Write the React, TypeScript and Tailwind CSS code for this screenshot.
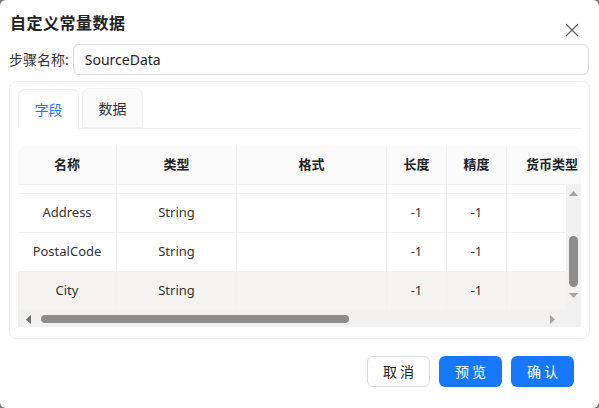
import React from "react";

const font = { fontFamily: '"Segoe UI", "Noto Sans", "Noto Sans CJK SC", sans-serif' };

const cols = [
  { key: "name", label: "名称", w: "w-[99px]" },
  { key: "type", label: "类型", w: "w-[120px]" },
  { key: "fmt", label: "格式", w: "w-[150px]" },
  { key: "len", label: "长度", w: "w-[60px]" },
  { key: "prec", label: "精度", w: "w-[60px]" },
  { key: "cur", label: "货币类型", w: "w-[90px]" },
];

const rows = [
  { name: "Address", type: "String", fmt: "", len: "-1", prec: "-1", cur: "" },
  { name: "PostalCode", type: "String", fmt: "", len: "-1", prec: "-1", cur: "" },
  { name: "City", type: "String", fmt: "", len: "-1", prec: "-1", cur: "", hover: true },
];

export default function App() {
  return (
    <div className="w-[599px] h-[408px] bg-[#7d7d7d]" style={font}>
      <div className="w-[599px] h-[408px] bg-white rounded-[6px] flex flex-col text-[#1f1f1f]">
        {/* Title */}
        <div className="flex items-center justify-between h-[44px] pl-[10px] pr-[20px] pt-[1px]">
          <div className="text-[16px] font-bold tracking-[0.5px] text-[#222]">自定义常量数据</div>
          <svg width="14" height="14" viewBox="0 0 14 14" className="mt-[14px]">
            <path d="M1 1 L13 13 M13 1 L1 13" stroke="#666" strokeWidth="1.3" fill="none" />
          </svg>
        </div>
        {/* step name */}
        <div className="flex items-center h-[31px] pl-[9px] pr-[10px]">
          <span className="text-[14px] text-[#333] mr-[4px]">步骤名称:</span>
          <div className="flex-1 h-[31px] border border-[#d9d9d9] rounded-[6px] flex items-center pl-[11px] text-[14px] text-[#222]">
            SourceData
          </div>
        </div>
        {/* panel */}
        <div className="mx-[9px] mt-[6px] h-[258px] border border-[#f0f0f0] rounded-[7px] px-[8px] pt-[7px]">
          {/* tabs */}
          <div className="flex items-end h-[40px] border-b border-[#f0f0f0]">
            <div className="w-[61px] h-[40px] border border-[#f0f0f0] border-b-white -mb-[1px] rounded-t-[7px] bg-white flex items-center justify-center text-[14px] text-[#1677ff]">
              字段
            </div>
            <div className="ml-[3px] w-[61px] h-[40px] border border-[#f0f0f0] rounded-t-[7px] bg-[#fafafa] flex items-center justify-center text-[14px] text-[#333]">
              数据
            </div>
          </div>
          {/* table */}
          <div className="mt-[17px] w-[563px] h-[181px] rounded-t-[7px] overflow-hidden flex flex-col">
            <div className="flex h-[39px] bg-[#fafafa] border-b border-[#f0f0f0] shrink-0">
              {cols.map((c, i) => (
                <div
                  key={c.key}
                  className={`${c.w} shrink-0 h-full flex items-center justify-center text-[13px] font-bold text-[#222] ${i < cols.length - 1 ? "border-r border-[#f0f0f0]" : ""}`}
                >
                  {c.label}
                </div>
              ))}
            </div>
            <div className="flex h-[126px] shrink-0">
              <div className="flex-1 overflow-hidden flex flex-col">
                <div className="flex h-[9px] shrink-0 border-b border-[#f0f0f0]">
                  {cols.map((c, i) => (
                    <div key={c.key} className={`${c.w} shrink-0 h-full ${i < cols.length - 1 ? "border-r border-[#f0f0f0]" : ""}`} />
                  ))}
                </div>
                {rows.map((r) => (
                  <div
                    key={r.name}
                    className={`flex h-[39px] shrink-0 border-b border-[#f0f0f0] ${r.hover ? "bg-[#f4f3f2]" : "bg-white"}`}
                  >
                    {cols.map((c, i) => (
                      <div
                        key={c.key}
                        className={`${c.w} shrink-0 h-full flex items-center justify-center text-[13px] text-[#333] ${i < cols.length - 1 ? "border-r border-[#f0f0f0]" : ""}`}
                      >
                        {(r as any)[c.key]}
                      </div>
                    ))}
                  </div>
                ))}
              </div>
              {/* vertical scrollbar */}
              <div className="w-[15px] shrink-0 bg-[#f1f1f1] flex flex-col items-center pt-[5px]">
                <svg width="9" height="6" viewBox="0 0 9 6" className="mt-[1px]">
                  <path d="M0 5 L4.5 0 L9 5 Z" fill="#a3a3a3" />
                </svg>
                <div className="mt-[39px] w-[9px] h-[51px] rounded-full bg-[#8c8c8c]" />
                <svg width="9" height="6" viewBox="0 0 9 6" className="mt-[6px]">
                  <path d="M0 0 L9 0 L4.5 5 Z" fill="#a3a3a3" />
                </svg>
              </div>
            </div>
            {/* horizontal scrollbar */}
            <div className="flex h-[16px] shrink-0">
              <div className="flex-1 bg-[#f1f1f1] flex items-center pl-[8px] pr-[10px]">
                <svg width="6" height="9" viewBox="0 0 6 9">
                  <path d="M5 0 L5 9 L0 4.5 Z" fill="#6b6b6b" />
                </svg>
                <div className="ml-[9px] w-[308px] h-[8px] rounded-full bg-[#8c8c8c]" />
                <div className="flex-1" />
                <svg width="6" height="9" viewBox="0 0 6 9">
                  <path d="M0 0 L5 4.5 L0 9 Z" fill="#a3a3a3" />
                </svg>
              </div>
              <div className="w-[15px] bg-[#f1f1f1]" />
            </div>
          </div>
        </div>
        {/* footer */}
        <div className="flex justify-end gap-[9px] pr-[25px] mt-[17px]">
          <button className="w-[63px] h-[31px] border border-[#d9d9d9] rounded-[6px] bg-white text-[14px] text-[#222] tracking-[3px] pl-[3px]">
            取消
          </button>
          <button className="w-[63px] h-[31px] rounded-[6px] bg-[#1677ff] text-[14px] text-white tracking-[3px] pl-[3px]">
            预览
          </button>
          <button className="w-[63px] h-[31px] rounded-[6px] bg-[#1677ff] text-[14px] text-white tracking-[3px] pl-[3px]">
            确认
          </button>
        </div>
      </div>
    </div>
  );
}
